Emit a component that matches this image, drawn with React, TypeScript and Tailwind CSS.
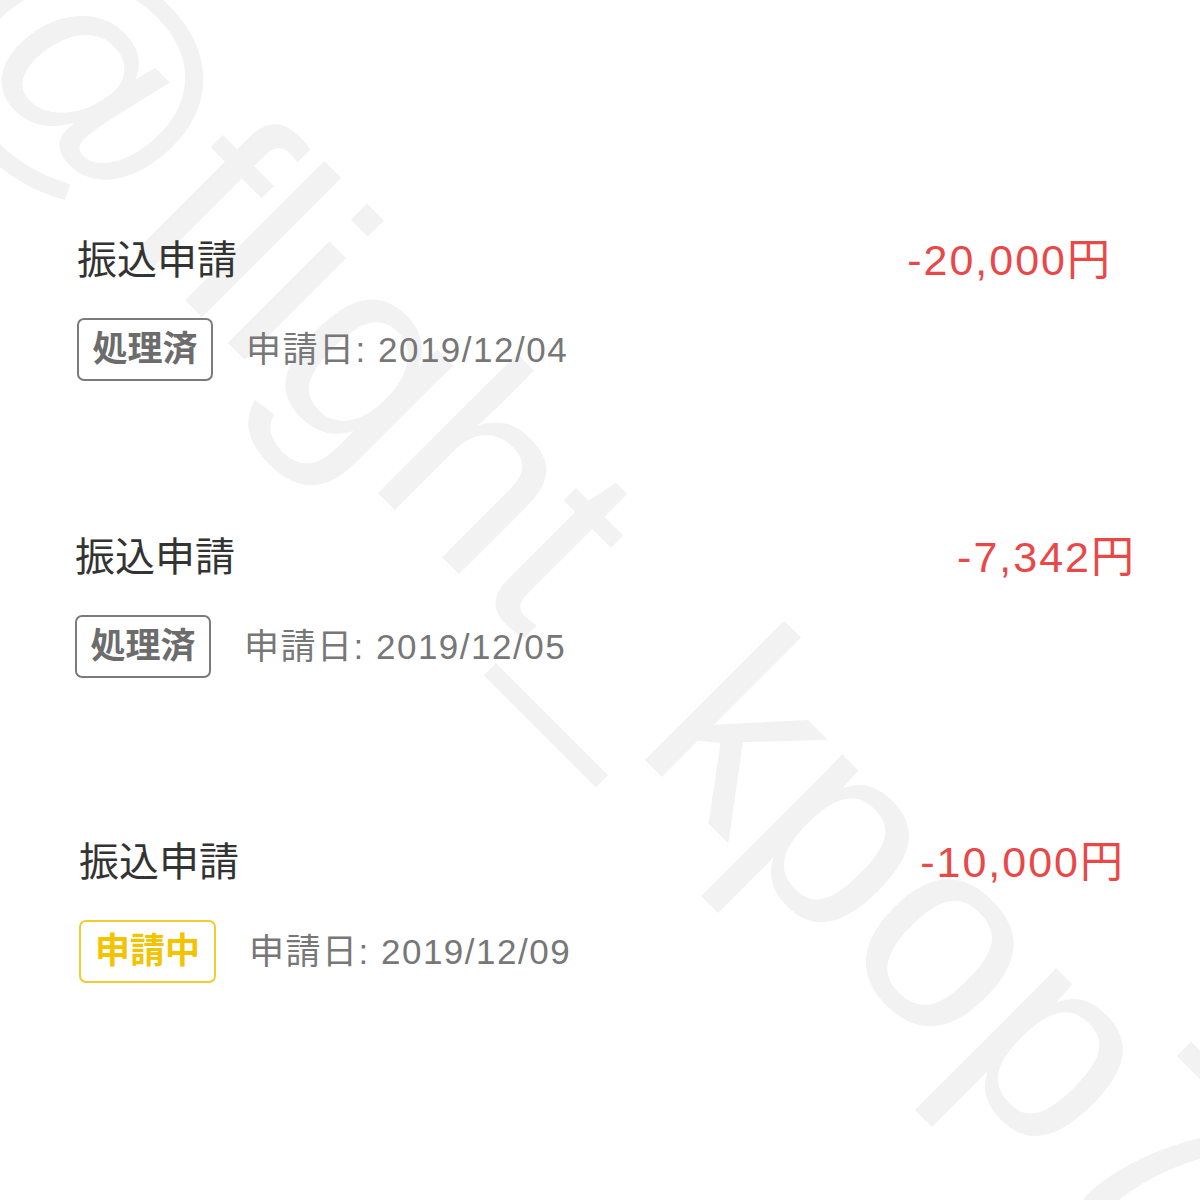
import React from "react";

type Status = "done" | "pending";

interface Transfer {
  title: string;
  amount: string;
  status: Status;
  date: string;
  wrap: string;
}

const transfers: Transfer[] = [
  { title: "振込申請", amount: "-20,000円", status: "done", date: "2019/12/04", wrap: "mt-[236px] pl-[77px] pr-[88px]" },
  { title: "振込申請", amount: "-7,342円", status: "done", date: "2019/12/05", wrap: "mt-[152px] pl-[75px] pr-[64px]" },
  { title: "振込申請", amount: "-10,000円", status: "pending", date: "2019/12/09", wrap: "mt-[160px] pl-[79px] pr-[75px]" },
];

const font = "font-['Liberation_Sans','Noto_Sans_CJK_JP',sans-serif]";

const StatusBadge: React.FC<{ status: Status }> = ({ status }) => {
  if (status === "pending") {
    return (
      <div className="flex h-[63px] w-[137px] items-center justify-center rounded-[7px] border-2 border-[#f2cb2e] text-[35px] font-bold text-[#f4c300]">
        申請中
      </div>
    );
  }
  return (
    <div className="flex h-[63px] w-[136px] items-center justify-center rounded-[7px] border-2 border-[#7b7b7b] text-[35px] font-bold text-[#6c6c6c]">
      処理済
    </div>
  );
};

const App: React.FC = () => {
  return (
    <div className={`relative h-[1200px] w-[1200px] overflow-hidden bg-white ${font}`}>
      {/* watermark */}
      <div className="pointer-events-none absolute left-[86px] top-[-124px] origin-top-left rotate-45 whitespace-nowrap text-[272px] leading-none text-[#f2f2f2] font-['Liberation_Sans',sans-serif]">
        @flight_kpop7
      </div>

      <div className="relative flex flex-col">
        {transfers.map((t, i) => (
          <div key={i} className={`flex flex-col ${t.wrap}`}>
            <div className="flex h-[48px] items-center justify-between">
              <p className="text-[40px] leading-[48px] text-[#333333]">{t.title}</p>
              <p className="text-[43px] leading-[48px] tracking-[2px] text-[#e94848]">{t.amount}</p>
            </div>
            <div className="mt-[34px] flex items-center">
              <StatusBadge status={t.status} />
              <p className="ml-[33px] text-[35px] leading-[40px] tracking-[1.5px] text-[#777777]">
                申請日: {t.date}
              </p>
            </div>
          </div>
        ))}
      </div>
    </div>
  );
};

export default App;
